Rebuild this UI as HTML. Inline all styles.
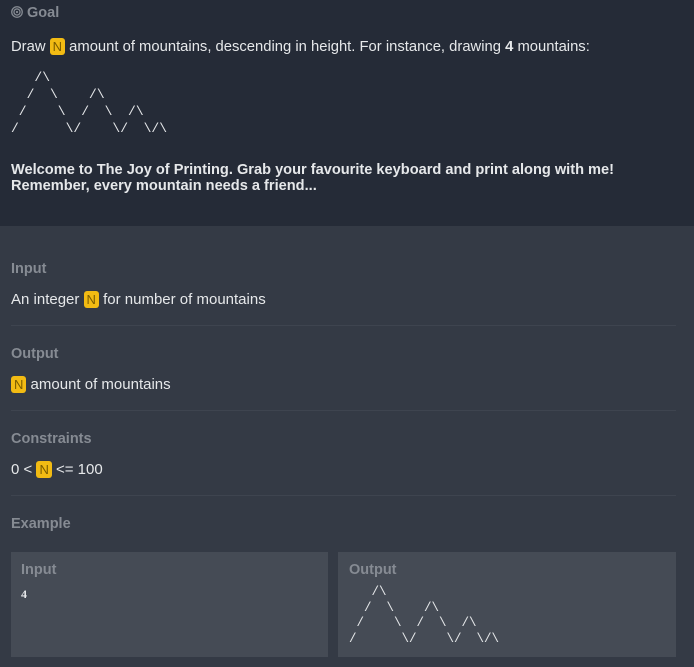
<!DOCTYPE html>
<html><head><meta charset="utf-8"><style>
*{margin:0;padding:0;box-sizing:border-box}
body{width:694px;height:667px;overflow:hidden;background:#343a45;font-family:"Liberation Sans",sans-serif;color:#e6e8ea;font-size:15px;position:relative}
.top{position:absolute;left:0;top:0;width:694px;height:226px;background:#252b37}
.abs{position:absolute;white-space:nowrap}
.lbl{color:#868b93;font-weight:bold;font-size:14.5px}
.n{display:inline-block;background:#f2bb13;color:#7a5c00;border-radius:3px;padding:0 3px;line-height:17px;font-size:13px}
pre.abs{font-family:"Liberation Mono",monospace;font-size:13px;line-height:17px;color:#e6e8ea;white-space:pre}
.sep{position:absolute;left:11px;width:665px;height:1px;background:#3e444f}
.box{position:absolute;top:552px;height:105px;background:#454b55}
</style></head><body>
<div class="top"></div>
<div class="abs lbl" style="left:11px;top:5px;color:#868b93">
<svg width="12" height="12" viewBox="0 0 13 13" style="vertical-align:-1px;margin-right:4px"><circle cx="6.5" cy="6.5" r="5.7" fill="none" stroke="#868b93" stroke-width="1.4"/><circle cx="6.5" cy="6.5" r="3.3" fill="none" stroke="#868b93" stroke-width="1.4"/><circle cx="6.5" cy="6.5" r="1.2" fill="#868b93"/></svg>Goal</div>
<div class="abs" style="left:11px;top:38px;font-size:14.8px">Draw <span class="n">N</span> amount of mountains, descending in height. For instance, drawing <b>4</b> mountains:</div>
<pre class="abs" style="left:11px;top:69px">   /\
  /  \    /\
 /    \  /  \  /\
/      \/    \/  \/\</pre>
<div class="abs" style="left:11px;top:162px;font-weight:bold;line-height:16px;font-size:14.6px">Welcome to The Joy of Printing. Grab your favourite keyboard and print along with me!<br>Remember, every mountain needs a friend...</div>
<div class="abs lbl" style="left:11px;top:261px">Input</div>
<div class="abs" style="left:11px;top:291px">An integer <span class="n">N</span> for number of mountains</div>
<div class="sep" style="top:325px"></div>
<div class="abs lbl" style="left:11px;top:346px">Output</div>
<div class="abs" style="left:11px;top:376px"><span class="n">N</span> amount of mountains</div>
<div class="sep" style="top:410px"></div>
<div class="abs lbl" style="left:11px;top:431px">Constraints</div>
<div class="abs" style="left:11px;top:461px">0 &lt; <span class="n">N</span> &lt;= 100</div>
<div class="sep" style="top:495px"></div>
<div class="abs lbl" style="left:11px;top:516px">Example</div>
<div class="box" style="left:11px;width:317px"></div>
<div class="box" style="left:338px;width:338px"></div>
<div class="abs lbl" style="left:21px;top:562px">Input</div>
<div class="abs" style="left:21px;top:587px;font-family:'Liberation Serif',serif;font-weight:bold;font-size:12px">4</div>
<div class="abs lbl" style="left:349px;top:562px">Output</div>
<pre class="abs" style="left:349px;top:585px;line-height:15.5px;font-size:12.5px">   /\
  /  \    /\
 /    \  /  \  /\
/      \/    \/  \/\</pre>
</body></html>
